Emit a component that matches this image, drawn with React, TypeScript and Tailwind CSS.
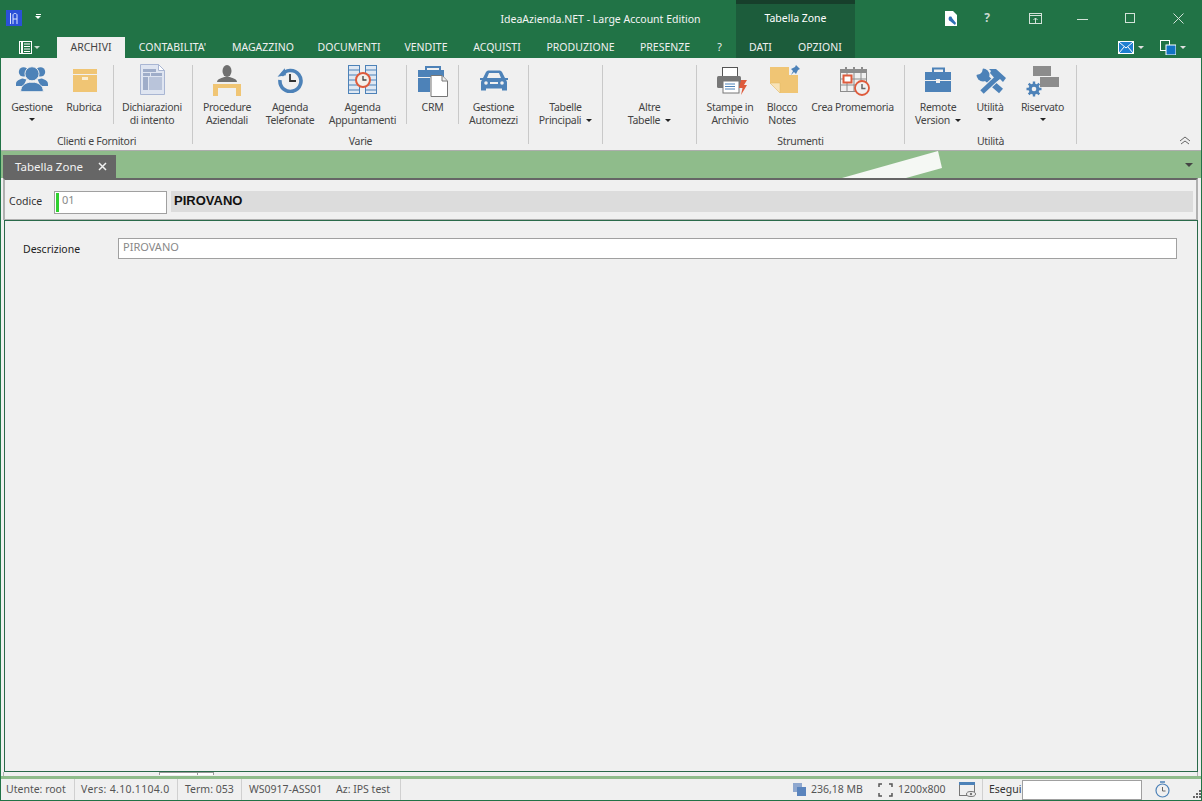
import type { ReactNode } from 'react';

const BLUE = '#4d82b8';
const AMBER = '#f0c574';
const GRAY = '#8c8c8c';
const RED = '#de5b3c';

function Caret({ className = '' }: { className?: string }) {
  return <span className={`inline-block h-0 w-0 border-x-[3px] border-t-[3px] border-x-transparent border-t-[#222] ${className}`} />;
}

function GestioneIcon() {
  return (
    <svg width="32" height="27" viewBox="0 0 34 28">
      <g fill={BLUE}>
        <circle cx="8" cy="7" r="5" />
        <circle cx="26" cy="7" r="5" />
        <path d="M0 20c0-4 4-5 7-6l4 1-3 7H0z" />
        <path d="M34 20c0-4-4-5-7-6l-4 1 3 7h8z" />
      </g>
      <circle cx="17" cy="9" r="7.5" fill={BLUE} stroke="#f0f0f0" strokeWidth="1" />
      <path d="M5 28c0-7 5-9 9-10h6c4 1 9 3 9 10z" fill={BLUE} stroke="#f0f0f0" strokeWidth="1" />
    </svg>
  );
}

function RubricaIcon() {
  return (
    <svg width="24" height="23" viewBox="0 0 24 23">
      <rect x="0" y="0" width="24" height="5" fill={AMBER} />
      <rect x="0" y="6" width="24" height="17" fill={AMBER} />
      <rect x="9" y="8" width="6" height="3" fill="#fbeed2" />
    </svg>
  );
}

function DichiarazioniIcon() {
  return (
    <svg width="25" height="31" viewBox="0 0 25 31">
      <path d="M.5.5h18l6 6v24H.5z" fill="#dfe5f1" stroke="#a9b6d3" />
      <path d="M18.5.5v6h6z" fill="#fff" stroke="#a9b6d3" />
      <rect x="3" y="5" width="13" height="3" fill="#9fadc9" />
      <rect x="3" y="9" width="7" height="3" fill="#9fadc9" />
      <rect x="11" y="9" width="11" height="3" fill="#9fadc9" />
      <rect x="3" y="13" width="5" height="13" fill="#9fadc9" />
      <rect x="9" y="13" width="13" height="13" fill="#b9c4da" />
    </svg>
  );
}

function ProcedureIcon() {
  return (
    <svg width="28" height="32" viewBox="0 0 28 32">
      <ellipse cx="14" cy="7" rx="4.5" ry="6" fill="#6f6f6f" />
      <path d="M4 18c0-3 5-4 7-5h6c2 1 7 2 7 5z" fill="#6f6f6f" />
      <path d="M0 20h28v12h-5v-8H5v8H0z" fill={AMBER} />
    </svg>
  );
}

function HistoryIcon() {
  return (
    <svg width="26" height="26" viewBox="0 0 26 26">
      <path d="M4.5 8.5A10.5 10.5 0 1 1 3 13" fill="none" stroke={BLUE} strokeWidth="3.6" />
      <path d="M0 9h8.500V2z" fill={BLUE} transform="rotate(-10 4 6)" />
      <path d="M13 7v7h6" fill="none" stroke="#333" strokeWidth="1.800" />
    </svg>
  );
}

function AppuntamentiIcon() {
  return (
    <svg width="29" height="29" viewBox="0 0 29 29">
      <g fill="#dfe8f3" stroke={BLUE}>
        <rect x=".5" y=".5" width="11" height="28" />
        <rect x="17.500" y=".5" width="11" height="28" />
      </g>
      <path d="M1 5h10M1 10h10M1 15h10M1 20h10M1 25h10M18 5h10M18 10h10M18 15h10M18 20h10M18 25h10" stroke={BLUE} />
      <circle cx="15" cy="15" r="7" fill="#f4f0ea" stroke={RED} strokeWidth="2" />
      <path d="M15 11v4h3.500" fill="none" stroke="#444" strokeWidth="1.300" />
    </svg>
  );
}

function CrmIcon() {
  return (
    <svg width="30" height="31" viewBox="0 0 30 31">
      <path d="M8 4V1h14v3" fill="none" stroke={BLUE} strokeWidth="2" />
      <path d="M0 4h26v7H0zM0 12h12v14H0z" fill={BLUE} />
      <path d="M13 9.500h11l5.500 5.500v15.500H13z" fill="#fff" stroke="#777" />
      <path d="M24 10v5h5" fill="#eee" stroke="#777" />
    </svg>
  );
}

function CarIcon() {
  return (
    <svg width="28" height="21" viewBox="0 0 28 21">
      <path d="M6 2C7 .8 8 .5 9 .5h10c1 0 2 .3 3 1.500l3 6h3v2h-2c.6.6 1 1.500 1 2.500v8h-5v-2H6v2H1v-8c0-1 .4-1.900 1-2.500H0v-2h3z" fill={BLUE} />
      <path d="M7 8l2-5h10l2 5z" fill="#f0f0f0" />
      <circle cx="6" cy="13" r="1.800" fill="#f0f0f0" />
      <circle cx="22" cy="13" r="1.800" fill="#f0f0f0" />
      <rect x="10" y="12" width="8" height="2" fill="#f0f0f0" />
    </svg>
  );
}

function StampeIcon() {
  return (
    <svg width="30" height="28" viewBox="0 0 30 28">
      <rect x="5.500" y=".5" width="15" height="9" fill="#fff" stroke="#555" />
      <rect x="0" y="9" width="24" height="12" rx="1.500" fill="#777" />
      <rect x="6" y="14" width="16" height="12" fill="#fff" stroke="#777" />
      <path d="M8 17h10M8 19.500h10M8 22h10" stroke={BLUE} />
      <path d="M24 13h6l-3 5h3l-6 10 1.500-7H22z" fill={RED} />
    </svg>
  );
}

function NotesIcon() {
  return (
    <svg width="31" height="31" viewBox="0 0 31 31">
      <path d="M0 3h28v26H10L0 19z" fill={AMBER} />
      <path d="M0 19h10v10z" fill="#f8e3b8" stroke="#e0b866" strokeWidth=".5" />
      <rect x="19" y="0" width="12" height="11" fill="#f0f0f0" />
      <path d="M26 1l4 4-2 1-2 4-2-2-3 3 2-4-2-2 4-2z" fill={BLUE} />
    </svg>
  );
}

function PromemoriaIcon() {
  return (
    <svg width="31" height="31" viewBox="0 0 31 31">
      <rect x=".5" y="3.500" width="26" height="22" fill="#f0f0f0" stroke={GRAY} />
      <rect x="0" y="3" width="27" height="4" fill={GRAY} />
      <path d="M6 1v5M14 1v5M22 1v5" stroke={GRAY} strokeWidth="2" />
      <path d="M7 7v19M14 7v19M21 7v19M1 13h26M1 19h26" stroke={GRAY} />
      <rect x="3.500" y="9.500" width="8" height="7" fill="#fff" stroke={RED} strokeWidth="2" />
      <circle cx="22" cy="22" r="7" fill="#f0f0f0" stroke={RED} strokeWidth="1.800" />
      <path d="M22 18v4.500h3.500" fill="none" stroke="#666" strokeWidth="1.500" />
    </svg>
  );
}

function BriefcaseIcon() {
  return (
    <svg width="27" height="25" viewBox="0 0 27 25">
      <path d="M8 5V1.500h11V5" fill="none" stroke={BLUE} strokeWidth="2" />
      <path d="M0 5h26v8H15v-1h-4v1H0zM0 14h11v2h4v-2h11v11H0z" fill={BLUE} />
    </svg>
  );
}

function ToolsIcon() {
  return (
    <svg width="30" height="26" viewBox="0 0 30 26">
      <path d="M9 9l16 14" fill="none" stroke={BLUE} strokeWidth="6" />
      <circle cx="7" cy="7" r="6.500" fill={BLUE} />
      <path d="M0 0h7L6 4 4 6 0 7z" fill="#f0f0f0" />
      <path d="M23 8L6 24" fill="none" stroke="#f0f0f0" strokeWidth="7" />
      <path d="M22 9L6 24" fill="none" stroke={BLUE} strokeWidth="5" />
      <path d="M13 1h7l10 9-3 4-3-3-3 2-7-8 1-2z" fill={BLUE} />
    </svg>
  );
}

function RiservatoIcon() {
  return (
    <svg width="33" height="31" viewBox="0 0 33 31">
      <rect x="7" y="0" width="18" height="10" fill={GRAY} />
      <rect x="14" y="11" width="19" height="10" fill={GRAY} />
      <path d="M8 15.500v15M.5 23h15M2.700 17.700l10.600 10.600M13.300 17.700 2.700 28.300" stroke={BLUE} strokeWidth="2.400" />
      <circle cx="8" cy="23" r="5.500" fill={BLUE} />
      <circle cx="8" cy="23" r="2.300" fill="#f0f0f0" />
    </svg>
  );
}

function Sep() {
  return <div className="mt-[7px] h-[59px] w-px shrink-0 bg-[#c9c9c9]" />;
}

function Item({ w, icon, iconTop, lines, caret }: { w: string; icon?: ReactNode; iconTop: string; lines: string[]; caret?: 'inline' | 'below' }) {
  return (
    <div className={`flex shrink-0 flex-col items-center ${w}`}>
      <div className={`flex h-[43px] w-full justify-center ${iconTop}`}>{icon}</div>
      {lines.map((line, i) => (
        <div key={line} className="flex items-center gap-[5px] whitespace-nowrap leading-[13px]">
          {line}
          {caret === 'inline' && i === lines.length - 1 && <Caret />}
        </div>
      ))}
      {caret === 'below' && <Caret className="mt-[4px]" />}
    </div>
  );
}

function Group({ w, label, children }: { w: string; label?: string; children: ReactNode }) {
  return (
    <div className={`flex shrink-0 ${w}`}>
      <div className="flex min-w-0 flex-1 flex-col">
        <div className="flex h-[76px]">{children}</div>
        <div className="text-center leading-[14px]">{label}</div>
      </div>
      <div className="mt-[7px] h-[79px] w-px shrink-0 bg-[#c9c9c9]" />
    </div>
  );
}

const TABS = [
  { label: 'CONTABILITA\'', w: 'w-[95px]' },
  { label: 'MAGAZZINO', w: 'w-[86px]' },
  { label: 'DOCUMENTI', w: 'w-[86px]' },
  { label: 'VENDITE', w: 'w-[68px]' },
  { label: 'ACQUISTI', w: 'w-[74px]' },
  { label: 'PRODUZIONE', w: 'w-[93px]' },
  { label: 'PRESENZE', w: 'w-[76px]' },
  { label: '?', w: 'w-[33px]' },
];

export default function App() {
  return (
    <div className="relative flex h-[801px] w-[1202px] flex-col overflow-hidden border-x border-b border-[#217346] bg-[#f0f0f0] font-['Noto_Sans','Open_Sans',sans-serif] text-[10.5px] text-[#444]">
      {/* barra titolo + tab ribbon */}
      <div className="-mx-px h-[58px] shrink-0 bg-[#217346] text-white">
        <div className="flex h-[37px]">
          <div className="ml-[6px] mt-[10px] flex h-[16px] w-[16px] items-center justify-center bg-[#2b50d8]">
            <svg width="10" height="13" viewBox="0 0 10 13" fill="none" stroke="#dfe6ff" strokeWidth="1">
              <path d="M1.500 1v11M4 12V3c0-2 4-2 4 0v9M4 7h4" />
            </svg>
          </div>
          <div className="ml-[13px] mt-[14px] flex flex-col items-center gap-[1px]">
            <div className="h-px w-[5px] bg-white" />
            <Caret className="border-x-[2.500px] border-t-[3px] border-t-white" />
          </div>
          <div className="ml-[452px] mt-[11px] w-[215px] whitespace-nowrap text-center text-[10.5px] leading-[16px] text-[#f4f4f4]">IdeaAzienda.NET - Large Account Edition</div>
          <div className="ml-[28px] h-[37px] w-[119px] border-t-[4px] border-[#173f2b] bg-[#1c5c3b] pt-[6px] text-center text-[10.5px] leading-[16px]">Tabella Zone</div>
          <div className="ml-[88px] mt-[10px] flex h-[16px] w-[16px] items-center justify-center">
            <svg width="13" height="15" viewBox="0 0 13 15">
              <path d="M0 0h8l4 4v11H0z" fill="#fff" />
              <path d="M4 6c2-1 3 0 3 1l4 5-1 2-5-4c-1 0-2-2-1-4z" fill="#2f6fb5" />
            </svg>
          </div>
          <div className="ml-[20px] mt-[9px] w-[16px] text-center text-[12px] font-bold leading-[18px] text-[#c9d9d0]">?</div>
          <div className="ml-[34px] mt-[13px]">
            <svg width="13" height="11" viewBox="0 0 13 11" fill="none" stroke="#d3e2d9">
              <rect x=".5" y=".5" width="12" height="10" />
              <path d="M1 2.500h11M6.500 10V5M4.500 7l2-2 2 2" />
            </svg>
          </div>
          <div className="ml-[35px] mt-[19px] h-px w-[11px] bg-[#d3e2d9]" />
          <div className="ml-[37px] mt-[13px] h-[10px] w-[10px] border border-[#d3e2d9]" />
          <div className="ml-[38px] mt-[13px]">
            <svg width="11" height="11" viewBox="0 0 11 11" stroke="#d3e2d9">
              <path d="M.5.500l10 10M10.500.5l-10 10" />
            </svg>
          </div>
        </div>
        <div className="flex h-[21px] items-stretch text-[10.5px] text-[#f0f0f0]">
          <div className="ml-[19px] flex w-[38px] items-start gap-[2px] pt-[4px]">
            <svg width="13" height="13" viewBox="0 0 13 13">
              <rect x=".5" y=".5" width="12" height="12" fill="none" stroke="#fff" />
              <path d="M3 1v11" stroke="#fff" strokeWidth="2" />
              <path d="M5 3h6M5 5.500h6M5 8h6M5 10.500h6" stroke="#fff" />
            </svg>
            <Caret className="mt-[5px] border-t-[#c9d9d0]" />
          </div>
          <div className="flex w-[68px] items-center justify-center bg-[#f0f0f0] text-[#444]">ARCHIVI</div>
          <div className="flex">
            {TABS.map((t) => (
              <div key={t.label} className={`flex items-center justify-center ${t.w}`}>{t.label}</div>
            ))}
          </div>
          <div className="flex w-[119px] bg-[#1c5c3b]">
            <div className="flex w-[49px] items-center justify-center">DATI</div>
            <div className="flex w-[70px] items-center justify-center">OPZIONI</div>
          </div>
          <div className="ml-[263px] flex items-start pt-[4px]">
            <svg width="16" height="13" viewBox="0 0 16 13">
              <rect width="16" height="13" fill="#fff" />
              <rect x="1" y="1" width="14" height="11" fill="#1e7fd0" />
              <path d="M1 1l7 6 7-6M1 12l5-6M15 12l-5-6" stroke="#fff" fill="none" />
            </svg>
            <Caret className="ml-[4px] mt-[5px] border-t-[#e0e0e0]" />
          </div>
          <div className="ml-[16px] flex items-start pt-[3px]">
            <svg width="16" height="15" viewBox="0 0 16 15">
              <rect x=".5" y=".5" width="9" height="10" fill="none" stroke="#fff" />
              <rect x="6" y="5" width="10" height="10" fill="#1273c4" stroke="#fff" />
            </svg>
            <Caret className="ml-[4px] mt-[6px] border-t-[#e0e0e0]" />
          </div>
        </div>
      </div>

      {/* ribbon */}
      <div className="flex h-[92px] shrink-0 bg-[#f0f0f0] tracking-[-0.3px]">
        <Group w="w-[192px]" label="Clienti e Fornitori">
          <div className="w-[5px]" />
          <Item w="w-[52px]" iconTop="pt-[7px]" icon={<GestioneIcon />} lines={['Gestione']} caret="below" />
          <Item w="w-[52px]" iconTop="pt-[11px] pl-[2px]" icon={<RubricaIcon />} lines={['Rubrica']} />
          <div className="w-[3px]" />
          <Sep />
          <Item w="w-[76px]" iconTop="pt-[6px]" icon={<DichiarazioniIcon />} lines={['Dichiarazioni', 'di intento']} />
        </Group>
        <Group w="w-[336px]" label="Varie">
          <Item w="w-[68px]" iconTop="pt-[6px]" icon={<ProcedureIcon />} lines={['Procedure', 'Aziendali']} />
          <Item w="w-[58px]" iconTop="pt-[9px]" icon={<HistoryIcon />} lines={['Agenda', 'Telefonate']} />
          <Item w="w-[87px]" iconTop="pt-[7px]" icon={<AppuntamentiIcon />} lines={['Agenda', 'Appuntamenti']} />
          <Sep />
          <Item w="w-[51px]" iconTop="pt-[8px]" icon={<CrmIcon />} lines={['CRM']} />
          <Sep />
          <Item w="w-[69px]" iconTop="pt-[12px]" icon={<CarIcon />} lines={['Gestione', 'Automezzi']} />
        </Group>
        <Group w="w-[74px]">
          <Item w="w-[73px]" iconTop="" lines={['Tabelle', 'Principali']} caret="inline" />
        </Group>
        <Group w="w-[94px]">
          <Item w="w-[93px]" iconTop="" lines={['Altre', 'Tabelle']} caret="inline" />
        </Group>
        <Group w="w-[208px]" label="Strumenti">
          <Item w="w-[66px]" iconTop="pt-[9px] pl-[4px]" icon={<StampeIcon />} lines={['Stampe in', 'Archivio']} />
          <Item w="w-[38px]" iconTop="pt-[6px] pl-[6px]" icon={<NotesIcon />} lines={['Blocco', 'Notes']} />
          <Item w="w-[103px]" iconTop="pt-[8px] pl-[6px]" icon={<PromemoriaIcon />} lines={['Crea Promemoria']} />
        </Group>
        <Group w="w-[172px]" label="Utilità">
          <Item w="w-[66px]" iconTop="pt-[9px]" icon={<BriefcaseIcon />} lines={['Remote', 'Version']} caret="inline" />
          <Item w="w-[38px]" iconTop="pt-[10px] pl-[2px]" icon={<ToolsIcon />} lines={['Utilità']} caret="below" />
          <Item w="w-[67px]" iconTop="pt-[8px]" icon={<RiservatoIcon />} lines={['Riservato']} caret="below" />
        </Group>
        <div className="flex flex-1 items-end justify-end pb-[5px] pr-[10px]">
          <svg width="12" height="9" viewBox="0 0 12 9" fill="none" stroke="#666">
            <path d="M1 5l5-4 5 4M2 8l4-3 4 3" />
          </svg>
        </div>
      </div>

      {/* striscia documenti */}
      <div className="relative h-[28px] shrink-0 border-t border-[#adadad] bg-[#8fbc8b] pl-[2px] pt-[4px]">
        <div className="flex h-[23px] w-[113px] items-center bg-[#666] pl-[12px] text-[11.5px] text-[#f2f2f2]">
          Tabella Zone
          <svg className="ml-[15px]" width="9" height="9" viewBox="0 0 9 9" stroke="#f2f2f2" strokeWidth="1.500">
            <path d="M1 1l7 7M8 1L1 8" />
          </svg>
        </div>
        <svg className="absolute left-[841px] top-0" width="100" height="27" viewBox="0 0 100 27">
          <path d="M0 27L96 0l4 17-36 10z" fill="#f5f8f4" />
        </svg>
        <Caret className="absolute left-[1184px] top-[12px] border-x-[4px] border-t-[4px] border-t-[#444]" />
      </div>

      {/* pagina */}
      <div className="flex min-h-0 flex-1 flex-col pl-[2px] pr-[3px]">
        <div className="flex h-[42px] shrink-0 items-center border-x-2 border-b border-t-2 border-x-[#b0b0b0] border-b-[#b0b0b0] border-t-[#666] pl-[4px] pr-[3px] pt-[5px]">
          <span className="w-[45px] text-[#333]">Codice</span>
          <div className="flex h-[23px] w-[113px] border border-[#a0a0a0] bg-white p-[1px]">
            <div className="h-full w-[3px] bg-[#2fd02f]" />
            <span className="pl-[3px] text-[11px] leading-[14px] text-[#888]">01</span>
          </div>
          <div className="mb-[2px] ml-[4px] flex h-[21px] flex-1 items-center bg-[#dcdcdc] pl-[3px] font-['Liberation_Sans',sans-serif] text-[13px] font-bold text-[#111]">PIROVANO</div>
        </div>
        <div className="ml-[1px] min-h-0 flex-1 border border-[#2a6a4a] bg-[#f0f0f0] pl-[18px] pr-[20px] pt-[17px]">
          <div className="flex items-center">
            <span className="w-[95px] pt-[2px] text-[#222]">Descrizione</span>
            <div className="flex h-[21px] flex-1 items-start border border-[#a0a0a0] bg-white pl-[4px] text-[11px] leading-[16px] text-[#888]">PIROVANO</div>
          </div>
        </div>
        <div className="flex h-[4px] shrink-0 items-start border-x border-[#b0b0b0] bg-[#f0f0f0] pl-[155px]">
          <div className="h-[3px] w-[39px] border-x border-t border-[#999] bg-white" />
          <div className="h-[3px] w-[16px] border-r border-t border-[#999] bg-white" />
        </div>
      </div>
      <div className="h-[3px] shrink-0 bg-[#8fbc8b]" />

      {/* barra di stato */}
      <div className="flex h-[21px] shrink-0 items-center text-[#555]">
        <div className="flex h-full w-[74px] items-center border-r border-[#d0d0d0] pl-[5px]">Utente: root</div>
        <div className="flex h-full w-[103px] items-center border-r border-[#d0d0d0] pl-[6px] tracking-[0.3px]">Vers: 4.10.1104.0</div>
        <div className="flex h-full w-[64px] items-center border-r border-[#d0d0d0] pl-[7px]">Term: 053</div>
        <div className="flex h-full w-[87px] items-center pl-[7px]">WS0917-ASS01</div>
        <div className="flex h-full w-[72px] items-center border-r border-[#d0d0d0] pl-[7px]">Az: IPS test</div>
        <svg className="ml-[392px]" width="13" height="13" viewBox="0 0 13 13">
          <rect x="0" y="0" width="9" height="9" fill="#8fa8cf" />
          <rect x="4" y="4" width="9" height="9" fill="#5a84bd" />
        </svg>
        <span className="ml-[5px] w-[51px] whitespace-nowrap">236,18 MB</span>
        <svg className="ml-[16px]" width="15" height="14" viewBox="0 0 15 14" fill="none" stroke="#555" strokeWidth="1.500">
          <path d="M1 4V1h3M11 1h3v3M14 10v3h-3M4 13H1v-3" />
        </svg>
        <span className="ml-[5px] w-[51px] whitespace-nowrap">1200x800</span>
        <svg className="ml-[10px]" width="17" height="16" viewBox="0 0 17 16">
          <rect x=".5" y=".5" width="15" height="13" fill="#f0f0f0" stroke="#777" />
          <rect x="0" y="0" width="16" height="3" fill="#4d82b8" />
          <ellipse cx="12" cy="12" rx="4.500" ry="2.500" fill="#f0f0f0" stroke="#777" />
          <circle cx="12" cy="12" r="1.200" fill="#777" />
        </svg>
        <div className="ml-[6px] h-full w-px bg-[#d0d0d0]" />
        <span className="ml-[6px] w-[33px] text-[#333]">Esegui</span>
        <div className="h-[20px] w-[120px] border border-[#a0a0a0] bg-white" />
        <svg className="ml-[13px]" width="15" height="17" viewBox="0 0 15 17" fill="none" stroke="#4d82b8">
          <circle cx="7.500" cy="9.500" r="6.500" strokeWidth="1.200" />
          <path d="M5 1h5" strokeWidth="1.500" />
          <path d="M7.500 6v4h3" stroke="#666" />
        </svg>
        <svg className="ml-[23px] mt-[9px]" width="8" height="8" viewBox="0 0 8 8" fill="#666">
          <rect x="6" y="0" width="2" height="2" />
          <rect x="3" y="3" width="2" height="2" />
          <rect x="6" y="3" width="2" height="2" />
          <rect x="0" y="6" width="2" height="2" />
          <rect x="3" y="6" width="2" height="2" />
          <rect x="6" y="6" width="2" height="2" />
        </svg>
      </div>
    </div>
  );
}
